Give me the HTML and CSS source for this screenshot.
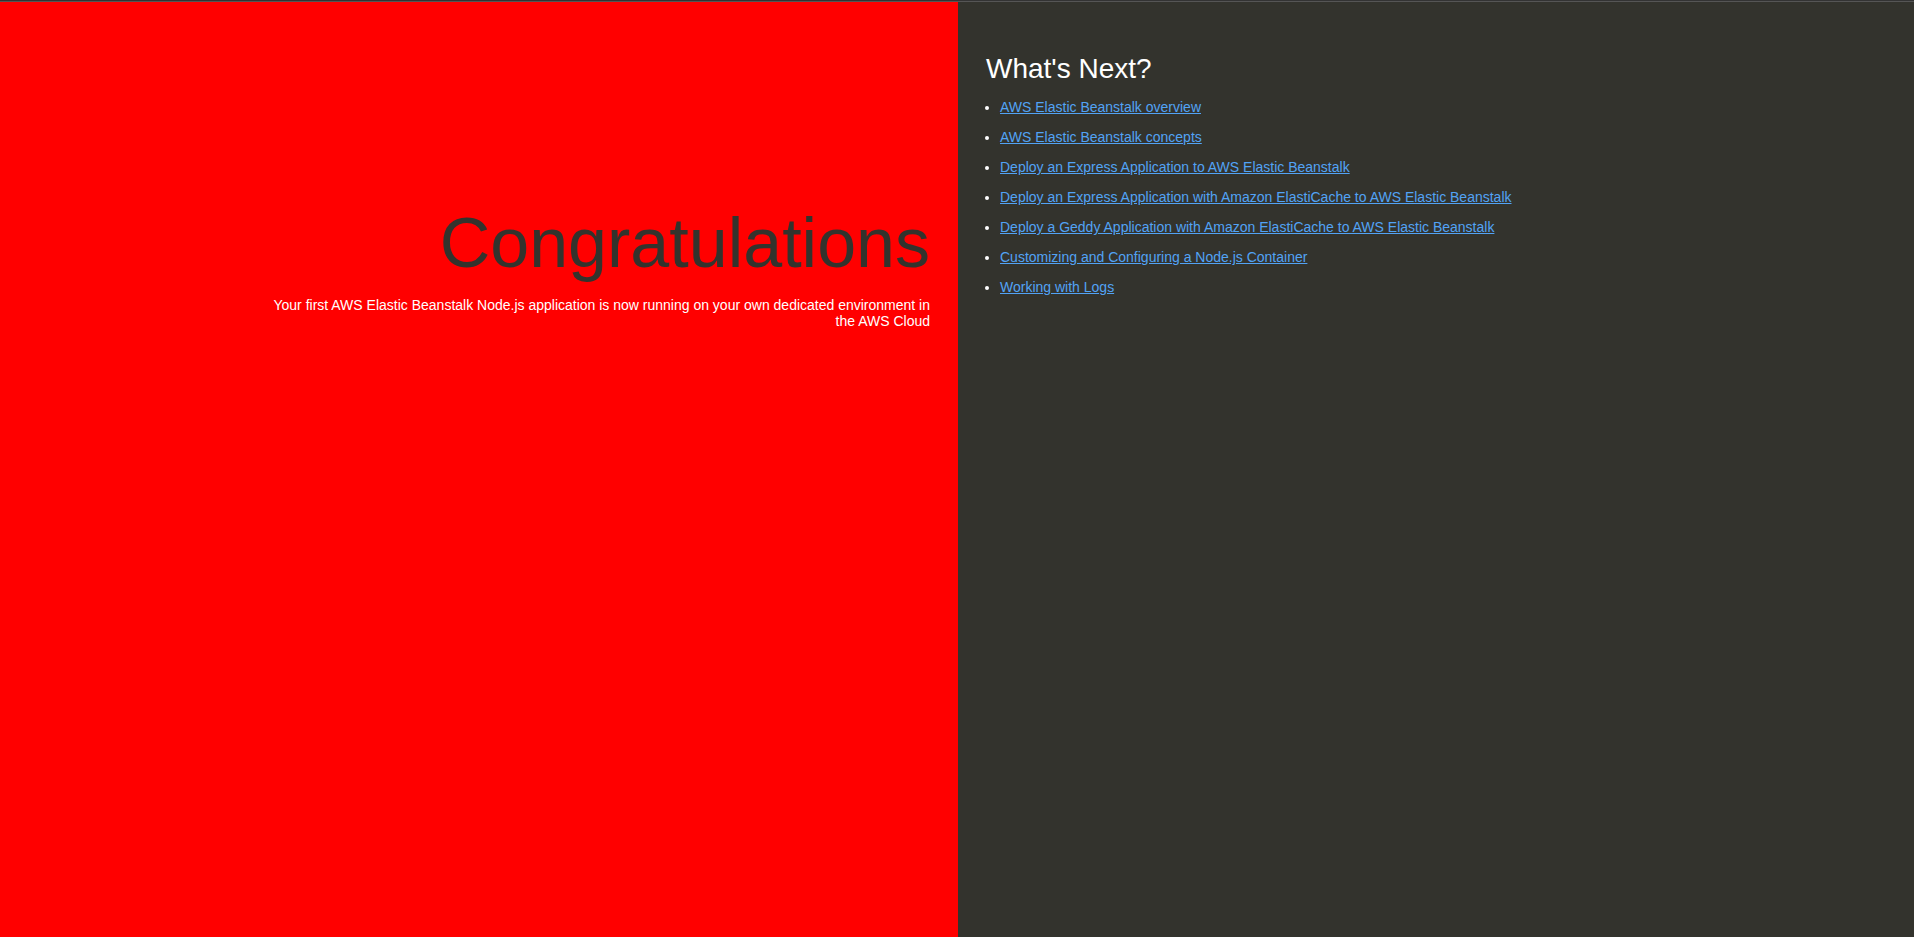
FILE: index.html
```html
<!DOCTYPE html>
<html>
<head>
<meta charset="utf-8">
<title>Welcome</title>
<link rel="stylesheet" href="styles.css">
</head>
<body>
<div class="topline"></div>
<div class="page">
  <div class="textColumn">
    <h1>Congratulations</h1>
    <p>Your first AWS Elastic Beanstalk Node.js application is now running on your own dedicated environment in the AWS Cloud</p>
  </div>
  <div class="linksColumn">
    <h2>What's Next?</h2>
    <ul>
      <li><a href="#">AWS Elastic Beanstalk overview</a></li>
      <li><a href="#">AWS Elastic Beanstalk concepts</a></li>
      <li><a href="#">Deploy an Express Application to AWS Elastic Beanstalk</a></li>
      <li><a href="#">Deploy an Express Application with Amazon ElastiCache to AWS Elastic Beanstalk</a></li>
      <li><a href="#">Deploy a Geddy Application with Amazon ElastiCache to AWS Elastic Beanstalk</a></li>
      <li><a href="#">Customizing and Configuring a Node.js Container</a></li>
      <li><a href="#">Working with Logs</a></li>
    </ul>
  </div>
</div>
</body>
</html>
```
FILE: styles.css
```css
html, body {
  margin: 0;
  height: 100%;
}
body {
  color: #ffffff;
  background-color: #33332d;
  font-family: "Liberation Sans", Arial, sans-serif;
  font-size: 14px;
  display: flex;
  flex-direction: column;
}
.topline {
  flex: 0 0 auto;
  height: 1px;
  background: #333333;
  border-bottom: 1px solid #555555;
}
.page {
  display: flex;
  flex: 1 1 auto;
  min-height: 0;
}
.textColumn, .linksColumn {
  box-sizing: border-box;
  padding: 2em;
}
.textColumn {
  flex: 0 0 calc(50% + 1px);
  text-align: right;
  padding-top: 11em;
  background-color: #ff0000;
}
.textColumn p {
  width: 75%;
  float: right;
  margin: 14px 0;
}
.linksColumn {
  flex: 1 1 0;
  background-color: #33332d;
}
h1 {
  font-size: 500%;
  font-weight: normal;
  margin: 0.67em 0 0;
  color: #33332d;
}
h2 {
  font-size: 200%;
  font-weight: normal;
  margin: 0.83em 0 0;
}
a {
  color: #52a3f5;
}
ul {
  padding-left: 1em;
  margin: 0;
}
li {
  margin: 1em 0;
}
```
